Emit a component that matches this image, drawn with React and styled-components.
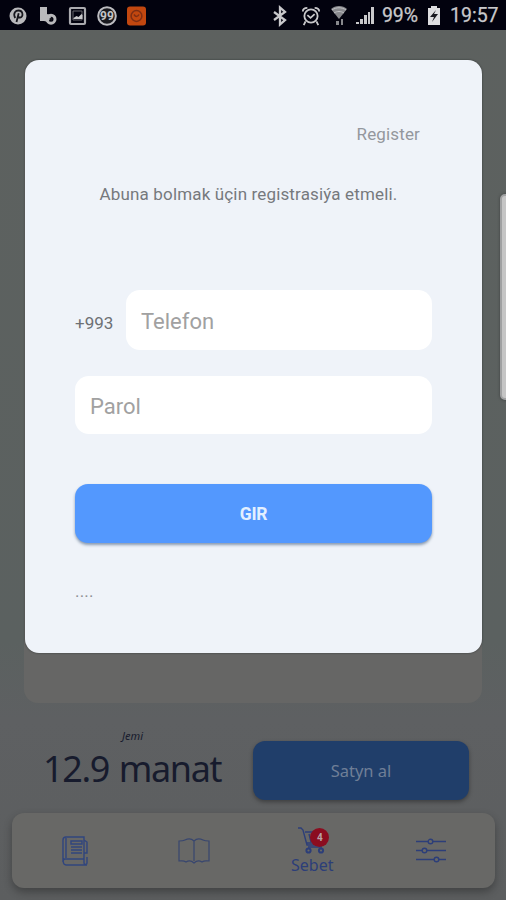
import React from "react";
import styled, { createGlobalStyle } from "styled-components";

const GlobalStyle = createGlobalStyle`
  * { box-sizing: border-box; }
  body { margin: 0; background: #5c605f; font-family: Roboto, sans-serif; }
`;

const Screen = styled.div`
  position: relative;
  display: flex;
  flex-direction: column;
  width: 506px;
  height: 900px;
  overflow: hidden;
  background: linear-gradient(#5d615f 0, #5b6160 640px, #5e6062 720px, #5c5e5f 100%);
`;

const StatusBar = styled.header`
  display: flex;
  flex: none;
  align-items: center;
  justify-content: space-between;
  height: 30px;
  padding: 1px 7px 0 9px;
  background: #02020e;
  color: #c9c9cb;
`;

const StatusGroup = styled.div`
  display: flex;
  align-items: center;
  gap: ${(p) => p.$gap}px;
`;

const StatusIcon = styled.svg`
  display: block;
  flex: none;
  width: ${(p) => p.$w || 20}px;
  height: ${(p) => p.$h || 20}px;
  overflow: visible;
`;

const StatusText = styled.span`
  padding-top: 1px;
  font-size: 19.5px;
  line-height: 28px;
  -webkit-text-stroke: 0.25px currentColor;
  width: ${(p) => p.$width}px;
  white-space: nowrap;
  letter-spacing: ${(p) => p.$spacing || 0}px;
`;

const ProductCard = styled.section`
  flex: none;
  height: 641px;
  margin: 32px 24px 0;
  border-radius: 14px;
  background: #666665;
`;

const PurchaseRow = styled.section`
  display: flex;
  flex: none;
  justify-content: space-between;
  height: 110px;
  padding: 0 37px 0 42px;
`;

const Price = styled.div`
  display: flex;
  flex-direction: column;
  width: 181px;
  padding-top: 26px;
  color: #171b2d;
  font-family: "Noto Sans", sans-serif;
`;

const PriceLabel = styled.span`
  align-self: center;
  font-size: 11px;
  line-height: 14px;
  font-style: italic;
`;

const PriceValue = styled.span`
  margin-top: 3px;
  padding-left: 1px;
  font-size: 36px;
  line-height: 46px;
  white-space: nowrap;
  letter-spacing: -1.4px;
  word-spacing: 2px;
`;

const BuyButton = styled.button`
  width: 216px;
  height: 59px;
  margin-top: 38px;
  padding: 0;
  border: 0;
  border-radius: 12px;
  background: #203e6a;
  box-shadow: 0 2px 4px rgba(0, 0, 0, 0.35);
  color: #6f7f97;
  font: 16.5px "Noto Sans", sans-serif;
`;

const NavBar = styled.nav`
  display: grid;
  flex: none;
  grid-template-columns: repeat(4, 1fr);
  height: 75px;
  margin: 0 11px 0 12px;
  padding: 0 5px 0 4px;
  border-radius: 12px;
  background: #686866;
  box-shadow: 0 4px 8px rgba(0, 0, 0, 0.3);
  color: #2c3e79;
`;

const NavItem = styled.a`
  display: flex;
  flex-direction: column;
  align-items: center;
  justify-content: center;
  font-family: "Noto Sans", sans-serif;
  font-size: 16px;
  line-height: 22px;
`;

const NavIcon = styled.svg`
  display: block;
  width: ${(p) => p.$w}px;
  height: ${(p) => p.$h}px;
  overflow: visible;
`;

const CartHolder = styled.span`
  position: relative;
  display: block;
`;

const CartBadge = styled.span`
  position: absolute;
  left: 12px;
  top: 2px;
  width: 19px;
  height: 19px;
  border-radius: 50%;
  background: #8b0d20;
  color: #b9a2a6;
  font: bold 10px/19px Roboto, sans-serif;
  text-align: center;
`;

const Dialog = styled.main`
  position: absolute;
  left: 25px;
  top: 60px;
  display: flex;
  flex-direction: column;
  width: 457px;
  height: 593px;
  padding: 61px 50px 0;
  border-radius: 14px;
  background: #eff3f9;
  box-shadow: 0 0 2px rgba(25, 30, 30, 0.7);
`;

const RegisterLink = styled.a`
  align-self: flex-end;
  margin-right: 12px;
  color: #94979d;
  font-size: 17px;
  line-height: 26px;
  letter-spacing: 0.15px;
`;

const Message = styled.p`
  margin: 34px 0 0;
  padding-right: 10px;
  color: #76797d;
  font-size: 17px;
  line-height: 26px;
  letter-spacing: 0.15px;
  text-align: center;
  white-space: nowrap;
`;

const PhoneRow = styled.label`
  display: flex;
  align-items: center;
  justify-content: space-between;
  margin-top: 83px;
`;

const CountryCode = styled.span`
  padding-top: 6px;
  color: #6d7074;
  font-size: 17px;
  line-height: 20px;
`;

const Field = styled.input`
  width: ${(p) => p.$width}px;
  height: ${(p) => p.$height}px;
  padding: 2px 15px 0;
  border: 0;
  border-radius: 14px;
  outline: 0;
  background: #fff;
  font: 22px Roboto, sans-serif;
  &::placeholder { color: #a1a1a1; opacity: 1; }
`;

const PasswordRow = styled.label`
  display: flex;
  margin-top: 26px;
`;

const LoginButton = styled.button`
  flex: none;
  height: 59px;
  margin-top: 50px;
  padding: 1px 0 0;
  border: 0;
  border-radius: 13px;
  background: #5398fe;
  box-shadow: 0 2px 3px rgba(35, 65, 105, 0.5);
  color: #e3f0ff;
  font: bold 17.5px Roboto, sans-serif;
  letter-spacing: -0.2px;
`;

const Footnote = styled.span`
  margin-top: 38px;
  color: #8d8f93;
  font-size: 17px;
  line-height: 20px;
  letter-spacing: 0.2px;
`;

const EdgeHandle = styled.aside`
  position: absolute;
  right: -6px;
  top: 194px;
  width: 12px;
  height: 206px;
  border: 2px solid #a0a1a2;
  border-radius: 5px;
  background: #c5c5c5;
  box-shadow: 0 0 3px rgba(30, 30, 30, 0.5);
`;

function NotificationIcons() {
  return (
    <StatusGroup $gap={10}>
      <StatusIcon viewBox="0 0 20 20" fill="none">
        <circle cx="9" cy="10" r="8.5" fill="#b9b9bb" />
        <path d="M6.2 12C3.5 6.5 7 4.5 9.5 4.5c5 0 5 7 1.6 7-1.5 0-2-1.2-2-1.2M9.7 7.3 7.5 16" stroke="#17171d" strokeWidth="1.8" />
      </StatusIcon>
      <StatusIcon viewBox="0 0 20 20" fill="none">
        <path d="M1 1h7v7l3 1 1 3-3 4-4-1H1z" fill="#b9b9bb" />
        <circle cx="12" cy="13.2" r="4" stroke="#b9b9bb" strokeWidth="3" />
        <path d="m10 13 3-2v4z" fill="#14141b" />
      </StatusIcon>
      <StatusIcon viewBox="0 0 20 20" fill="none">
        <rect x="1" y="2" width="15" height="16" rx="1" stroke="#aaaaae" strokeWidth="2.2" />
        <path d="M4 5h9v9H4z" stroke="#67676c" />
        <path d="m4.5 12 3-2 2 1 3-3 1 1v4h-9z" fill="#c8c8ca" />
      </StatusIcon>
      <StatusIcon viewBox="0 0 20 20">
        <circle cx="8" cy="10" r="8.8" fill="#19191e" stroke="#bcbcc0" strokeWidth="2" />
        <text x="8" y="14.2" textAnchor="middle" fill="#c4c4c6" fontFamily="Roboto" fontWeight="700" fontSize="12">99</text>
      </StatusIcon>
      <StatusIcon viewBox="0 0 20 20" fill="none">
        <rect x="-2" y="0.5" width="19" height="19" rx="3" fill="#c2470f" />
        <circle cx="7.5" cy="10" r="5.4" stroke="#7e2e13" strokeWidth="1.5" />
        <path d="M5 8.5c2 3 4 2 5 0" stroke="#7e2e13" strokeWidth="1.5" />
      </StatusIcon>
    </StatusGroup>
  );
}

function SystemIcons() {
  return (
    <StatusGroup $gap={8}>
      <StatusIcon $w={17} viewBox="3 0 17 20" fill="none" stroke="currentColor" strokeWidth="2.3">
        <path d="m2 6 11 8-5 4.5v-17L13 6 2 14" />
      </StatusIcon>
      <StatusIcon $w={22} viewBox="0 0 22 22" fill="none" stroke="currentColor" strokeWidth="2">
        <circle cx="11" cy="11" r="7.3" />
        <path d="M2 6c0-3 2-4 5-4m13 4c0-3-2-4-5-4M5 17l-2 4m14-4 2 4M7 10l3.5 3L15 9" />
      </StatusIcon>
      <StatusIcon $w={18} viewBox="0 0 18 20" fill="#88898d">
        <path d="M1 3c4-4 12-4 16 0l-8 10z" />
        <path d="M2 4c4-3 10-3 14 0M4 7c3-2 7-2 10 0" fill="none" stroke="#c1c1c5" />
        <path d="M6 15h3v4H6zm5-2h2v6h-2z" />
      </StatusIcon>
      <StatusIcon $w={18} viewBox="0 0 18 20" fill="currentColor">
        <path d="M0 16h3v2H0zm4-3h3v5H4zm4-4h3v9H8zm4-3h2v12h-2zm3-5h3v17h-3z" />
      </StatusIcon>
      <StatusText $width={38} $spacing={-0.1}>99%</StatusText>
      <StatusIcon $w={14} viewBox="1 0 14 20">
        <path d="M4 0h6v2h3v17H1V2h3z" fill="#dedee0" />
        <path d="M9 4 3 11h4l-2 5 6-8H7z" fill="#17171d" />
      </StatusIcon>
      <StatusText $width={49}>19:57</StatusText>
    </StatusGroup>
  );
}

function NewsIcon() {
  return (
    <NavIcon $w={26} $h={30} viewBox="0 0 26 30" fill="none" stroke="#30457e" strokeWidth="1.4">
      <path d="M22 4v23c0 2 3 2 3 0v-6m-3-4h3V6l-3-2M4 1h18v22H3c-3 0-2 6 1 6h21M4 1C2 1 1 2 1 4v22M4 2v20" />
      <path d="M9 5h11v3H9zm0 6h11M9 14h11M9 17h11" />
    </NavIcon>
  );
}

function BookIcon() {
  return (
    <NavIcon $w={32} $h={26} viewBox="0 0 32 26" fill="none" stroke="#38466f" strokeWidth="1.2">
      <path d="M16 3C13 0 9 1 7 2 5 3 4 3 1 3v20c3 0 4-1 7 1 3-2 6-1 8 1 2-2 5-3 8-1 3-2 4-1 7-1V3c-3 0-4 0-6-1-2-1-6-2-9 1zm0 0v20" />
    </NavIcon>
  );
}

function CartIcon() {
  return (
    <NavIcon $w={28} $h={28} viewBox="0 0 28 28" fill="none" stroke="currentColor" strokeWidth="1.4">
      <path d="M0 2h3l2 2 4 15h16M7 6h17l-3 11H9M11 8l2 8m4-8v8m5-8-3 8M10 21h14" />
      <circle cx="10.5" cy="24.5" r="2.1" strokeWidth="2" />
      <circle cx="23" cy="24.5" r="2.1" strokeWidth="2" />
    </NavIcon>
  );
}

function FilterIcon() {
  return (
    <NavIcon $w={30} $h={24} viewBox="0 0 30 24" fill="none" stroke="currentColor" strokeWidth="1.4">
      <path d="M0 2.5h12m5 0h13M0 11.5h6m5 0h19M0 20.5h18m5 0h7" />
      <circle cx="14.5" cy="2.5" r="2.3" />
      <circle cx="8.5" cy="11.5" r="2.3" />
      <circle cx="20.5" cy="20.5" r="2.3" />
    </NavIcon>
  );
}

export default function App() {
  return (
    <Screen>
      <GlobalStyle />
      <StatusBar>
        <NotificationIcons />
        <SystemIcons />
      </StatusBar>
      <ProductCard />
      <PurchaseRow>
        <Price>
          <PriceLabel>Jemi</PriceLabel>
          <PriceValue>12.9 manat</PriceValue>
        </Price>
        <BuyButton>Satyn al</BuyButton>
      </PurchaseRow>
      <NavBar>
        <NavItem><NewsIcon /></NavItem>
        <NavItem><BookIcon /></NavItem>
        <NavItem>
          <CartHolder>
            <CartIcon />
            <CartBadge>4</CartBadge>
          </CartHolder>
          Sebet
        </NavItem>
        <NavItem><FilterIcon /></NavItem>
      </NavBar>
      <Dialog>
        <RegisterLink>Register</RegisterLink>
        <Message>Abuna bolmak üçin registrasiýa etmeli.</Message>
        <PhoneRow>
          <CountryCode>+993</CountryCode>
          <Field $width={306} $height={60} type="tel" placeholder="Telefon" />
        </PhoneRow>
        <PasswordRow>
          <Field $width={357} $height={58} type="password" placeholder="Parol" />
        </PasswordRow>
        <LoginButton>GIR</LoginButton>
        <Footnote>....</Footnote>
      </Dialog>
      <EdgeHandle />
    </Screen>
  );
}
